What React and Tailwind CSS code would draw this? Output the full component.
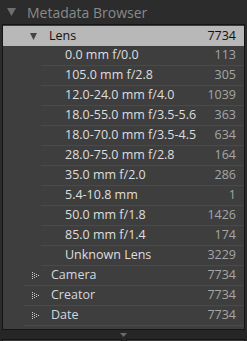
import React from "react";

const lenses = [
  ["0.0 mm f/0.0", 113],
  ["105.0 mm f/2.8", 305],
  ["12.0-24.0 mm f/4.0", 1039],
  ["18.0-55.0 mm f/3.5-5.6", 363],
  ["18.0-70.0 mm f/3.5-4.5", 634],
  ["28.0-75.0 mm f/2.8", 164],
  ["35.0 mm f/2.0", 286],
  ["5.4-10.8 mm", 1],
  ["50.0 mm f/1.8", 1426],
  ["85.0 mm f/1.4", 174],
  ["Unknown Lens", 3229],
];

const groups = ["Camera", "Creator", "Date"];

const DotArrow = () => (
  <svg width="7" height="7" viewBox="0 0 7 7" className="shrink-0">
    {[
      [0, 0], [0, 2], [0, 4], [0, 6],
      [2, 1], [2, 3], [2, 5],
      [4, 2], [4, 4],
      [6, 3],
    ].map(([x, y], i) => (
      <rect key={i} x={x} y={y} width="1" height="1" fill="#d0d0d0" />
    ))}
  </svg>
);

const App = () => {
  return (
    <div
      className="w-[247px] h-[341px] bg-[#2c2c2c] flex flex-col overflow-hidden"
      style={{ fontFamily: '"Open Sans", "Noto Sans", sans-serif' }}
    >
      {/* panel header */}
      <div className="h-[24px] flex items-center pl-[7px] shrink-0">
        <svg width="9" height="8" viewBox="0 0 9 8" className="shrink-0">
          <polygon points="0,0 9,0 4.5,8" fill="#6e6e6e" />
        </svg>
        <span className="ml-[11px] text-[14px] leading-none text-[#8a8a8a] pt-[1px]">
          Metadata Browser
        </span>
      </div>

      {/* list */}
      <div className="mx-[2px] h-[306px] border border-[#151515] bg-[#3e3e3e] flex flex-col shrink-0 pt-[1px]">
        <div className="h-[20px] bg-[#b8b8b8] flex items-center text-[12.5px] text-[#111]">
          <svg width="7" height="7" viewBox="0 0 7 7" className="ml-[27px] shrink-0">
            <polygon points="0,0 7,0 3.5,7" fill="#444" />
          </svg>
          <span className="ml-[12px]">Lens</span>
          <span className="ml-auto pr-[8px]">7734</span>
        </div>

        {lenses.map(([name, count]) => (
          <div
            key={name}
            className="h-[20px] ml-[38px] flex items-center border-b border-[#4a4a4a] text-[12.5px]"
          >
            <span className="pl-[24px] text-[#dedede]">{name}</span>
            <span className="ml-auto pr-[8px] text-[#a6a6a6]">{count}</span>
          </div>
        ))}

        {groups.map((g) => (
          <div
            key={g}
            className="h-[20px] ml-[21px] flex items-center border-b border-[#4a4a4a] text-[12.5px]"
          >
            <span className="ml-[8px]">
              <DotArrow />
            </span>
            <span className="ml-[12px] text-[#d4d8de]">{g}</span>
            <span className="ml-auto pr-[8px] text-[#a6a6a6]">7734</span>
          </div>
        ))}
      </div>

      {/* bottom strip */}
      <div className="flex-1 bg-[#262626] flex flex-col">
        <div className="h-[9px] flex justify-center items-center">
          <svg width="7" height="4" viewBox="0 0 7 4">
            <polygon points="0,0 7,0 3.5,4" fill="#6a6a6a" />
          </svg>
        </div>
        <div className="flex-1 flex gap-[4px] px-[2px]">
          <div className="flex-1 border-t border-x border-[#151515] bg-[#3a3a3a]" />
          <div className="flex-1 border-t border-x border-[#151515] bg-[#3a3a3a]" />
        </div>
      </div>
    </div>
  );
};

export default App;
